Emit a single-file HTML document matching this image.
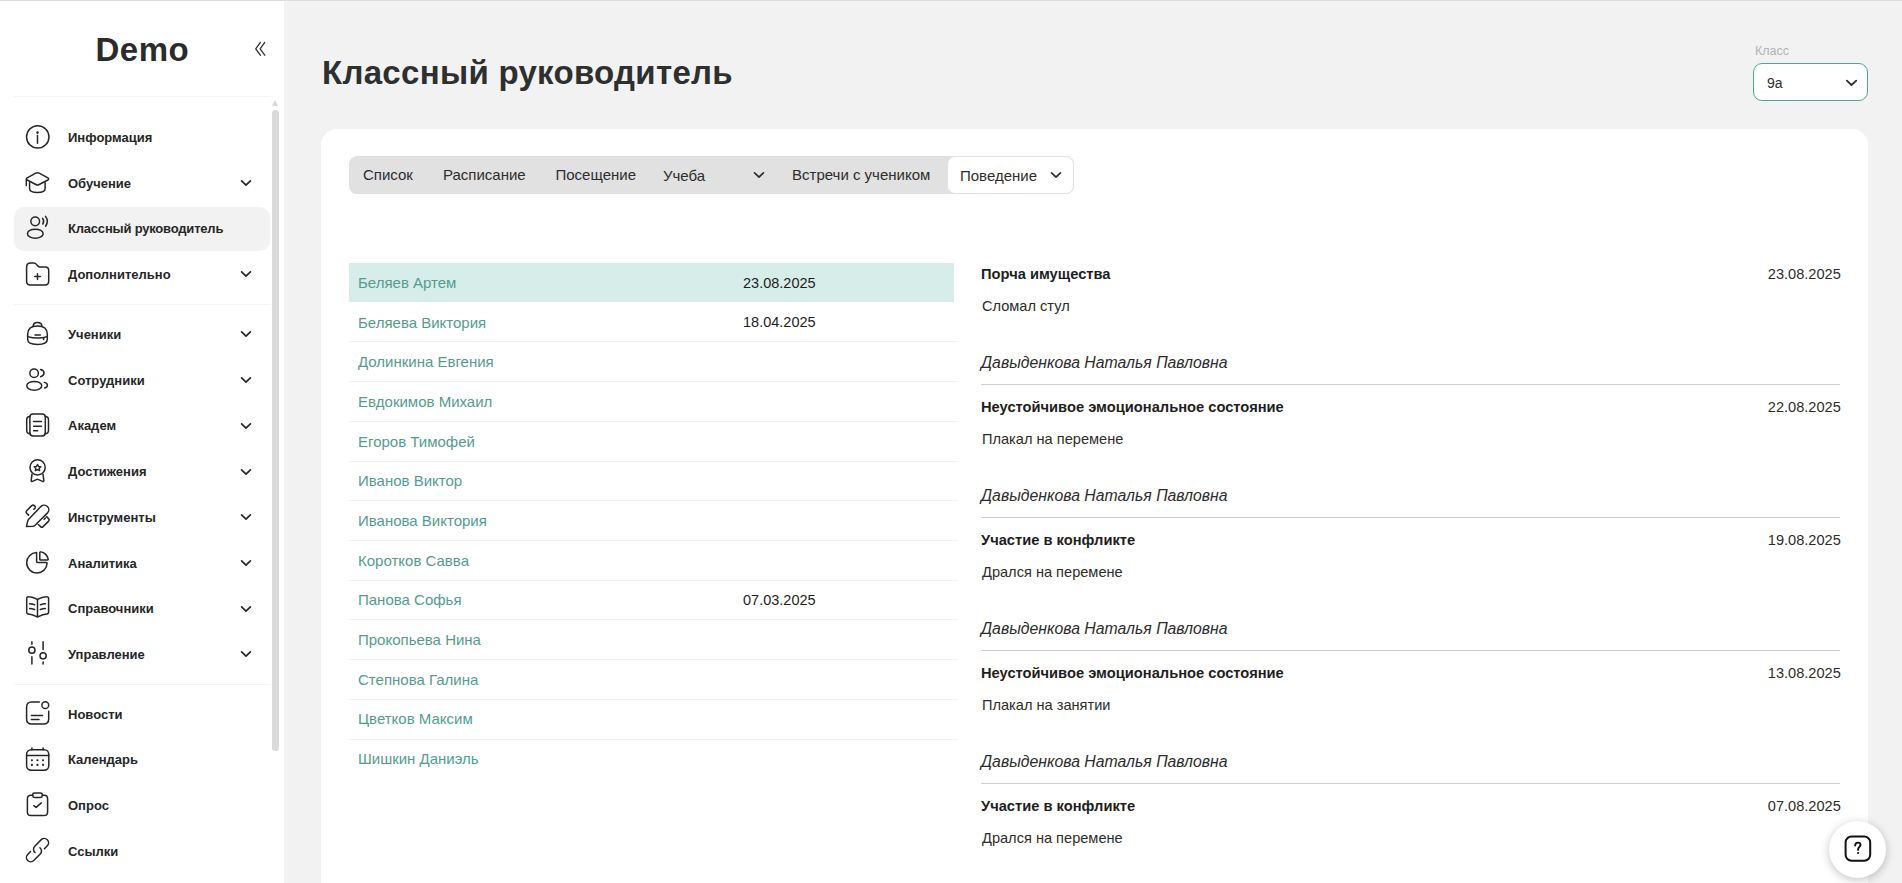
<!DOCTYPE html>
<html><head><meta charset="utf-8">
<style>
*{box-sizing:border-box;margin:0;padding:0}
html,body{width:1902px;height:883px;overflow:hidden;background:#f2f2f2;font-family:"Liberation Sans",sans-serif;color:#2d2d2d}
div{line-height:1}
.topline{position:absolute;left:0;top:0;width:1902px;height:1px;background:#dcdcdc;z-index:5}
#side{position:absolute;left:0;top:0;width:284px;height:883px;background:#fff}
.logo{position:absolute;left:95.5px;top:32.8px;font-weight:bold;font-size:33px;letter-spacing:0.5px;color:#2b2b2b;white-space:nowrap}
.collapse{position:absolute;left:252px;top:40px}
.dv{position:absolute;left:14px;width:257px;height:1px;background:#f4f4f4}
.sb{position:absolute;left:272px;top:110px;width:7px;height:641px;background:#dadada;border-radius:3.5px}
.sbarrow{position:absolute;left:272px;top:100px;width:0;height:0;border-left:3.5px solid transparent;border-right:3.5px solid transparent;border-bottom:6px solid #d8d8d8}
.act{position:absolute;left:14px;width:256px;height:44px;background:#f2f2f2;border-radius:10px}
svg.ic{position:absolute;left:21px}
.st{position:absolute;left:68px;font-weight:bold;font-size:13px;color:#262626;white-space:nowrap}
svg.chev{position:absolute;left:240px}
h1{position:absolute;left:322px;top:55.9px;line-height:1;font-size:33px;font-weight:bold;color:#2e2f2f;white-space:nowrap;letter-spacing:0.3px}
.lbl{position:absolute;left:1755px;top:45.2px;font-size:12.5px;color:#b3b3b3}
.sel{position:absolute;left:1753px;top:63px;width:115px;height:38px;border:1px solid #52a596;border-radius:9px;background:#fff}
.sel span{position:absolute;left:13px;top:11.5px;font-size:14px;line-height:1;color:#2d2d2d}
.sel svg{position:absolute;left:91px;top:15px}
.card{position:absolute;left:321px;top:129px;width:1547px;height:800px;background:#fff;border-radius:16px}
.tabs{position:absolute;left:349px;top:156px;width:725px;height:38px;background:#e1e1e1;border-radius:8px}
.tab{position:absolute;font-size:15px;color:#2d2d2d;white-space:nowrap}
.tabact{position:absolute;left:947px;top:156px;width:127px;height:38px;background:#fff;border:1px solid #e3e3e3;border-radius:8px}
.row{position:absolute;left:349px;width:605px;height:39.72px}
.row.hl{background:#d7ede9}
.rl{position:absolute;left:349px;width:609px;height:1px;background:#f2f2f2}
.nm{position:absolute;left:358px;font-size:15px;color:#549c90;white-space:nowrap}
.dtl{position:absolute;left:743px;font-size:14.5px;color:#1e1e1e;white-space:nowrap}
.et{position:absolute;left:981px;font-weight:bold;font-size:14.7px;color:#1e1e1e;white-space:nowrap}
.ed{position:absolute;right:61.2px;font-size:14.6px;color:#2d2d2d;white-space:nowrap}
.eds{position:absolute;left:982px;font-size:14.6px;color:#2d2d2d;white-space:nowrap}
.ea{position:absolute;left:981px;font-style:italic;font-size:15.8px;color:#2d2d2d;white-space:nowrap}
.el{position:absolute;left:981px;width:859px;height:1px;background:#cdcdcd}
.help{position:absolute;left:1829px;top:821px;width:57px;height:57px;border-radius:50%;background:#fff;box-shadow:0 2px 10px rgba(0,0,0,0.24)}
.help svg{position:absolute;left:14px;top:13px}
</style></head><body>
<div class="topline"></div>
<div id="side">
  <div class="logo">Demo</div>
  <svg class="collapse" width="16" height="18" viewBox="0 0 16 18" fill="none" stroke="#333" stroke-width="1.3" stroke-linecap="round" stroke-linejoin="round"><path d="M8.4 2.4L3.7 8.8L8.4 15.2"/><path d="M12.8 2.4L8.1 8.8L12.8 15.2"/></svg>
  <div class="dv" style="top:96px"></div>
  <div class="dv" style="top:304px"></div>
  <div class="dv" style="top:684px"></div>
  <div class="sbarrow"></div>
  <div class="sb"></div>
<svg class="ic" style="top:121px" width="32" height="32" viewBox="0 0 32 32" fill="none" stroke="#262626" stroke-width="1.5" stroke-linecap="round" stroke-linejoin="round"><circle cx="16.75" cy="15.9" r="11.2"/><path d="M16.5 14.6V22.2"/><circle cx="16.5" cy="11.6" r="0.55" fill="#262626"/></svg>
<div class="st" style="top:131.0px">Информация</div>
<svg class="ic" style="top:167px" width="32" height="32" viewBox="0 0 32 32" fill="none" stroke="#262626" stroke-width="1.5" stroke-linecap="round" stroke-linejoin="round"><path d="M6.2 10.9L14.8 6.2Q16.5 5.3 18.2 6.2L26.9 10.9Q28.4 12 26.9 13L18.2 17.5Q16.5 18.4 14.8 17.5L6.2 13Q4.6 12 6.2 10.9Z"/><path d="M5.3 12.4V18.4"/><path d="M8.6 15.8V21.6C8.6 24.2 12.2 25.6 16.5 25.6C20.8 25.6 24.1 24.2 24.1 21.6V15.8"/></svg>
<div class="st" style="top:176.5px">Обучение</div>
<svg class="chev" style="top:178.9px" width="12" height="8" viewBox="0 0 12 8" fill="none" stroke="#262626" stroke-width="1.7" stroke-linecap="round" stroke-linejoin="round"><path d="M1.6 1.9L6 6.1L10.4 1.9"/></svg>
<div class="act" style="top:206.6px"></div>
<svg class="ic" style="top:212px" width="32" height="32" viewBox="0 0 32 32" fill="none" stroke="#262626" stroke-width="1.5" stroke-linecap="round" stroke-linejoin="round"><circle cx="14.2" cy="9.35" r="4.35"/><ellipse cx="14.3" cy="21.65" rx="7.85" ry="4.5"/><path d="M21.6 6.4Q23.6 9.2 21.8 12"/><path d="M24.5 4.4Q28.2 9.2 24.6 14.2"/></svg>
<div class="st" style="top:222.2px;letter-spacing:-0.2px">Классный руководитель</div>
<svg class="ic" style="top:258px" width="32" height="32" viewBox="0 0 32 32" fill="none" stroke="#262626" stroke-width="1.5" stroke-linecap="round" stroke-linejoin="round"><path d="M5.6 9.2C5.6 6.8 7.2 5 9.6 5H12.6C14 5 14.9 5.6 15.7 6.6L16.6 7.8C17.3 8.7 18 9.1 19.2 9.1H24.2C26.3 9.1 27.7 10.5 27.7 12.6V23.3C27.7 25.5 26.2 27 24 27H9.2C7.1 27 5.6 25.5 5.6 23.3Z"/><path d="M13.7 18.6H19.4M16.5 15.8V21.4"/></svg>
<div class="st" style="top:267.9px">Дополнительно</div>
<svg class="chev" style="top:270.3px" width="12" height="8" viewBox="0 0 12 8" fill="none" stroke="#262626" stroke-width="1.7" stroke-linecap="round" stroke-linejoin="round"><path d="M1.6 1.9L6 6.1L10.4 1.9"/></svg>
<svg class="ic" style="top:318px" width="32" height="32" viewBox="0 0 32 32" fill="none" stroke="#262626" stroke-width="1.5" stroke-linecap="round" stroke-linejoin="round"><path d="M12.2 7.9Q12.4 4.4 16.5 4.4Q20.6 4.4 20.8 7.9"/><path d="M6.7 16C6.7 10.6 10.2 7.9 16.5 7.9C22.8 7.9 26.3 10.6 26.3 16V21.5C26.3 24.8 23.5 26.4 16.5 26.4C9.5 26.4 6.7 24.8 6.7 21.5Z"/><path d="M6.7 18.6Q16.5 21.6 26.3 18.6"/><path d="M14 17.1H19.4"/><path d="M22.6 20.2V21.4"/></svg>
<div class="st" style="top:328.0px">Ученики</div>
<svg class="chev" style="top:330.4px" width="12" height="8" viewBox="0 0 12 8" fill="none" stroke="#262626" stroke-width="1.7" stroke-linecap="round" stroke-linejoin="round"><path d="M1.6 1.9L6 6.1L10.4 1.9"/></svg>
<svg class="ic" style="top:364px" width="32" height="32" viewBox="0 0 32 32" fill="none" stroke="#262626" stroke-width="1.5" stroke-linecap="round" stroke-linejoin="round"><circle cx="13.1" cy="9.3" r="4.25"/><ellipse cx="13.25" cy="21.8" rx="7.5" ry="4.35"/><path d="M19.6 5.6Q23 6.3 23 9.1Q23 11.9 19.6 12.7"/><path d="M23.4 18.4Q26.4 19.2 26.4 21.2Q26.4 23.2 23.6 23.9"/></svg>
<div class="st" style="top:373.7px">Сотрудники</div>
<svg class="chev" style="top:376.1px" width="12" height="8" viewBox="0 0 12 8" fill="none" stroke="#262626" stroke-width="1.7" stroke-linecap="round" stroke-linejoin="round"><path d="M1.6 1.9L6 6.1L10.4 1.9"/></svg>
<svg class="ic" style="top:409px" width="32" height="32" viewBox="0 0 32 32" fill="none" stroke="#262626" stroke-width="1.5" stroke-linecap="round" stroke-linejoin="round"><rect x="8.9" y="4.9" width="15.4" height="22" rx="3.2"/><path d="M8.9 7.6Q5.7 7.6 5.7 11V21.2Q5.7 24.6 8.9 24.6"/><path d="M24.3 7.6Q27.5 7.6 27.5 11V21.2Q27.5 24.6 24.3 24.6"/><path d="M12.6 12.5H20.4M12.6 17.2H20.4M12.6 21.7H16.7"/></svg>
<div class="st" style="top:419.4px">Академ</div>
<svg class="chev" style="top:421.8px" width="12" height="8" viewBox="0 0 12 8" fill="none" stroke="#262626" stroke-width="1.7" stroke-linecap="round" stroke-linejoin="round"><path d="M1.6 1.9L6 6.1L10.4 1.9"/></svg>
<svg class="ic" style="top:455px" width="32" height="32" viewBox="0 0 32 32" fill="none" stroke="#262626" stroke-width="1.5" stroke-linecap="round" stroke-linejoin="round"><circle cx="16.6" cy="12.4" r="7.6"/><path d="M16.5 9.5L17.6 11.5L19.8 11.8L18.2 13.3L18.6 15.6L16.5 14.6L14.4 15.6L14.8 13.3L13.2 11.8L15.4 11.5Z"/><path d="M11 19.2L10.2 25.4Q10 27 11.5 26.4L15.4 24.6Q16.5 24.1 17.6 24.6L21.5 26.4Q23 27 22.8 25.4L22 19.2"/></svg>
<div class="st" style="top:465.1px">Достижения</div>
<svg class="chev" style="top:467.5px" width="12" height="8" viewBox="0 0 12 8" fill="none" stroke="#262626" stroke-width="1.7" stroke-linecap="round" stroke-linejoin="round"><path d="M1.6 1.9L6 6.1L10.4 1.9"/></svg>
<svg class="ic" style="top:500px" width="32" height="32" viewBox="0 0 32 32" fill="none" stroke="#262626" stroke-width="1.5" stroke-linecap="round" stroke-linejoin="round"><path d="M5.5 26.6L6.6 21.3C6.8 20.4 7.1 19.8 7.7 19.2L20.05 6.35A4.6 4.6 0 0 1 26.55 12.85L14.1 25.3C13.5 25.9 12.9 26.2 12.1 26.3Z"/><path d="M7.6 15.1L5.7 13.2C5 12.5 5 11.4 5.7 10.7L10.8 5.6C11.5 4.9 12.6 4.9 13.3 5.6L14.4 6.7M12.9 9.3L14.1 8.1"/><path d="M17.3 24.5L19.6 26.6C20.3 27.3 21.4 27.3 22.1 26.6L27.6 21.1C28.3 20.4 28.3 19.3 27.6 18.6L25.5 16.5M23.1 19.3L24.3 18.1"/></svg>
<div class="st" style="top:510.8px">Инструменты</div>
<svg class="chev" style="top:513.2px" width="12" height="8" viewBox="0 0 12 8" fill="none" stroke="#262626" stroke-width="1.7" stroke-linecap="round" stroke-linejoin="round"><path d="M1.6 1.9L6 6.1L10.4 1.9"/></svg>
<svg class="ic" style="top:546px" width="32" height="32" viewBox="0 0 32 32" fill="none" stroke="#262626" stroke-width="1.5" stroke-linecap="round" stroke-linejoin="round"><path d="M15.6 6.6C9.9 6.9 5.7 11.3 5.7 16.7C5.7 22.4 10.3 26.9 16 26.9C21.5 26.9 25.9 22.7 26.1 17.3C26.1 16.9 25.8 16.5 25.4 16.5H16.6C16 16.5 15.6 16 15.6 15.5Z"/><path d="M18.8 6.6V13.2C18.8 13.7 19.2 14 19.6 14H26.4C26.9 14 27.3 13.6 27.2 13.1C26.6 9.6 23.5 6.4 19.8 5.8C19.3 5.7 18.8 6.1 18.8 6.6Z"/></svg>
<div class="st" style="top:556.5px">Аналитика</div>
<svg class="chev" style="top:558.9px" width="12" height="8" viewBox="0 0 12 8" fill="none" stroke="#262626" stroke-width="1.7" stroke-linecap="round" stroke-linejoin="round"><path d="M1.6 1.9L6 6.1L10.4 1.9"/></svg>
<svg class="ic" style="top:592px" width="32" height="32" viewBox="0 0 32 32" fill="none" stroke="#262626" stroke-width="1.5" stroke-linecap="round" stroke-linejoin="round"><path d="M16.5 7.6V24.4"/><path d="M5.7 6.4C5.7 5.2 6.5 4.6 7.7 4.8C10.4 5 13 5.5 15.3 6.9L16.5 7.6L17.7 6.9C20 5.5 22.6 5 25.3 4.8C26.5 4.6 27.6 5.3 27.6 6.5V20.3C27.6 21.2 26.9 21.8 26 21.9C23 22.2 20.6 22.9 18 24.3L16.5 25L15 24.3C12.4 22.9 10 22.2 7 21.9C6.1 21.8 5.7 21.2 5.7 20.3Z"/><path d="M8.6 11.8Q11 12 13.6 12.8M8.6 16.5Q11 16.7 13.6 17.5M24.4 11.8Q22 12 19.4 12.8M24.4 16.5Q22 16.7 19.4 17.5"/></svg>
<div class="st" style="top:602.2px">Справочники</div>
<svg class="chev" style="top:604.6px" width="12" height="8" viewBox="0 0 12 8" fill="none" stroke="#262626" stroke-width="1.7" stroke-linecap="round" stroke-linejoin="round"><path d="M1.6 1.9L6 6.1L10.4 1.9"/></svg>
<svg class="ic" style="top:637px" width="32" height="32" viewBox="0 0 32 32" fill="none" stroke="#262626" stroke-width="1.5" stroke-linecap="round" stroke-linejoin="round"><path d="M10.9 4.8V7.2M10.9 19.7V27.1M22.1 4.8V12.6M22.1 24.9V27.1"/><circle cx="10.9" cy="13.2" r="3.1"/><circle cx="22.1" cy="18.8" r="3.1"/></svg>
<div class="st" style="top:647.9px">Управление</div>
<svg class="chev" style="top:650.3px" width="12" height="8" viewBox="0 0 12 8" fill="none" stroke="#262626" stroke-width="1.7" stroke-linecap="round" stroke-linejoin="round"><path d="M1.6 1.9L6 6.1L10.4 1.9"/></svg>
<svg class="ic" style="top:697px" width="32" height="32" viewBox="0 0 32 32" fill="none" stroke="#262626" stroke-width="1.5" stroke-linecap="round" stroke-linejoin="round"><path d="M18.3 4.9H10.6C7.2 4.9 5.6 6.8 5.6 10.2V22C5.6 25.4 7.2 27 10.6 27H22.6C26 27 27.7 25.4 27.7 22V14.3"/><circle cx="24.3" cy="8.15" r="3.4"/><path d="M10.4 18.4H21.5M10.4 22.4H18"/></svg>
<div class="st" style="top:707.5px">Новости</div>
<svg class="ic" style="top:743px" width="32" height="32" viewBox="0 0 32 32" fill="none" stroke="#262626" stroke-width="1.5" stroke-linecap="round" stroke-linejoin="round"><rect x="5.6" y="6.8" width="22.2" height="20.4" rx="4.6"/><path d="M10.9 5V6.8M22.1 5V6.8M5.6 12.6H27.8"/><g stroke-width="2.1"><path d="M10.85 17.2h.1M16.45 17.2h.1M22.05 17.2h.1M10.85 21.9h.1M16.45 21.9h.1M22.05 21.9h.1"/></g></svg>
<div class="st" style="top:753.2px">Календарь</div>
<svg class="ic" style="top:789px" width="32" height="32" viewBox="0 0 32 32" fill="none" stroke="#262626" stroke-width="1.5" stroke-linecap="round" stroke-linejoin="round"><path d="M11.8 6.3H9.8C7.4 6.3 6.4 7.6 6.4 10V23C6.4 25.4 7.6 26.6 10 26.6H23C25.4 26.6 26.6 25.4 26.6 23V10C26.6 7.6 25.6 6.3 23.2 6.3H21.2"/><path d="M13.4 3.9H19.6Q21.3 3.9 21.3 5.6V6.8Q21.3 8.4 19.6 8.4H13.4Q11.7 8.4 11.7 6.8V5.6Q11.7 3.9 13.4 3.9Z"/><path d="M12.8 16.7L15.1 18.4L20.3 13.9"/></svg>
<div class="st" style="top:798.9px">Опрос</div>
<svg class="ic" style="top:834px" width="32" height="32" viewBox="0 0 32 32" fill="none" stroke="#262626" stroke-width="1.5" stroke-linecap="round" stroke-linejoin="round"><path d="M23.4 14.7L26.34 11.74A4.3 4.3 0 0 0 20.26 5.66L13.76 12.16A4.3 4.3 0 0 0 14.04 18.49"/><path d="M9.6 17.5L6.66 20.46A4.3 4.3 0 0 0 12.74 26.54L19.24 20.04A4.3 4.3 0 0 0 18.96 13.71"/></svg>
<div class="st" style="top:844.6px">Ссылки</div>
</div>
<h1>Классный руководитель</h1>
<div class="lbl">Класс</div>
<div class="sel"><span>9а</span><svg width="13" height="8" viewBox="0 0 13 8" fill="none" stroke="#2d2d2d" stroke-width="1.8" stroke-linecap="round" stroke-linejoin="round"><path d="M1.8 1.6L6.5 6L11.2 1.6"/></svg></div>
<div class="card"></div>
<div class="tabs"></div>
<div class="tabact"></div>
<div class="tab" style="left:363px;top:167.3px">Список</div>
<div class="tab" style="left:443px;top:167.3px">Расписание</div>
<div class="tab" style="left:555.5px;top:167.3px">Посещение</div>
<div class="tab" style="left:663px;top:168.1px">Учеба</div>
<svg style="position:absolute;left:752.6px;top:171px" width="12" height="8" viewBox="0 0 12 8" fill="none" stroke="#2d2d2d" stroke-width="1.7" stroke-linecap="round" stroke-linejoin="round"><path d="M1.6 1.9L6 6.1L10.4 1.9"/></svg>
<div class="tab" style="left:792px;top:167.3px">Встречи с учеником</div>
<div class="tab" style="left:960px;top:168.1px">Поведение</div>
<svg style="position:absolute;left:1049.6px;top:171px" width="12" height="8" viewBox="0 0 12 8" fill="none" stroke="#2d2d2d" stroke-width="1.7" stroke-linecap="round" stroke-linejoin="round"><path d="M1.6 1.9L6 6.1L10.4 1.9"/></svg>
<div class="row hl" style="top:262.60px"></div>
<div class="nm" style="top:275.00px">Беляев Артем</div>
<div class="dtl" style="top:275.84px">23.08.2025</div>
<div class="row" style="top:302.32px"></div>
<div class="nm" style="top:314.66px">Беляева Виктория</div>
<div class="dtl" style="top:315.48px">18.04.2025</div>
<div class="rl" style="top:341.34px"></div>
<div class="row" style="top:342.04px"></div>
<div class="nm" style="top:354.32px">Долинкина Евгения</div>
<div class="rl" style="top:381.06px"></div>
<div class="row" style="top:381.76px"></div>
<div class="nm" style="top:393.98px">Евдокимов Михаил</div>
<div class="rl" style="top:420.78px"></div>
<div class="row" style="top:421.48px"></div>
<div class="nm" style="top:433.64px">Егоров Тимофей</div>
<div class="rl" style="top:460.50px"></div>
<div class="row" style="top:461.20px"></div>
<div class="nm" style="top:473.30px">Иванов Виктор</div>
<div class="rl" style="top:500.22px"></div>
<div class="row" style="top:500.92px"></div>
<div class="nm" style="top:512.96px">Иванова Виктория</div>
<div class="rl" style="top:539.94px"></div>
<div class="row" style="top:540.64px"></div>
<div class="nm" style="top:552.62px">Коротков Савва</div>
<div class="rl" style="top:579.66px"></div>
<div class="row" style="top:580.36px"></div>
<div class="nm" style="top:592.28px">Панова Софья</div>
<div class="dtl" style="top:592.96px">07.03.2025</div>
<div class="rl" style="top:619.38px"></div>
<div class="row" style="top:620.08px"></div>
<div class="nm" style="top:631.94px">Прокопьева Нина</div>
<div class="rl" style="top:659.10px"></div>
<div class="row" style="top:659.80px"></div>
<div class="nm" style="top:671.60px">Степнова Галина</div>
<div class="rl" style="top:698.82px"></div>
<div class="row" style="top:699.52px"></div>
<div class="nm" style="top:711.26px">Цветков Максим</div>
<div class="rl" style="top:738.54px"></div>
<div class="row" style="top:739.24px"></div>
<div class="nm" style="top:750.92px">Шишкин Даниэль</div>
<div class="et" style="top:266.9px">Порча имущества</div>
<div class="ed" style="top:266.9px">23.08.2025</div>
<div class="eds" style="top:298.9px">Сломал стул</div>
<div class="ea" style="top:355.3px">Давыденкова Наталья Павловна</div>
<div class="el" style="top:384.0px"></div>
<div class="et" style="top:399.9px">Неустойчивое эмоциональное состояние</div>
<div class="ed" style="top:399.9px">22.08.2025</div>
<div class="eds" style="top:431.9px">Плакал на перемене</div>
<div class="ea" style="top:488.3px">Давыденкова Наталья Павловна</div>
<div class="el" style="top:517.0px"></div>
<div class="et" style="top:532.8px">Участие в конфликте</div>
<div class="ed" style="top:532.9px">19.08.2025</div>
<div class="eds" style="top:564.9px">Дрался на перемене</div>
<div class="ea" style="top:621.3px">Давыденкова Наталья Павловна</div>
<div class="el" style="top:650.0px"></div>
<div class="et" style="top:665.8px">Неустойчивое эмоциональное состояние</div>
<div class="ed" style="top:665.9px">13.08.2025</div>
<div class="eds" style="top:697.9px">Плакал на занятии</div>
<div class="ea" style="top:754.3px">Давыденкова Наталья Павловна</div>
<div class="el" style="top:783.0px"></div>
<div class="et" style="top:798.8px">Участие в конфликте</div>
<div class="ed" style="top:798.9px">07.08.2025</div>
<div class="eds" style="top:830.9px">Дрался на перемене</div>
<div class="help"><svg width="30" height="30" viewBox="0 0 30 30" fill="none" stroke="#111" stroke-width="2" stroke-linecap="round" stroke-linejoin="round"><rect x="2.6" y="2.5" width="24.6" height="24.2" rx="6"/><path stroke-width="1.9" d="M12.2 11.5C12.2 9.7 13.3 8.6 14.9 8.6C16.5 8.6 17.5 9.6 17.5 11C17.5 12.7 15.1 13.2 15.1 15.2V15.9"/><circle cx="15.1" cy="19" r="1.05" fill="#111" stroke="none"/></svg></div>
</body></html>
